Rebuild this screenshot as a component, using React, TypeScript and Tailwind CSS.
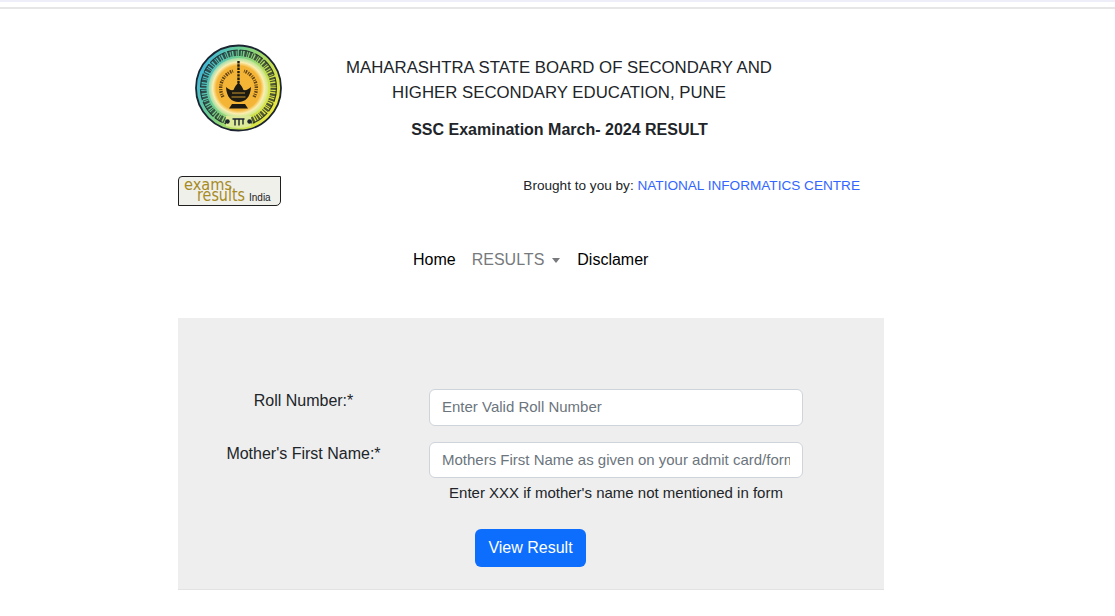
import React from 'react';

function BoardLogo() {
  return (
    <svg width="88" height="88" viewBox="0 0 88 88" className="block">
      <defs>
        <linearGradient id="ring" x1="0" y1="0.25" x2="1" y2="0.75">
          <stop offset="0" stopColor="#38b4e6" />
          <stop offset="0.35" stopColor="#6fcf8f" />
          <stop offset="0.7" stopColor="#c4df52" />
          <stop offset="1" stopColor="#f5ea3a" />
        </linearGradient>
        <radialGradient id="core">
          <stop offset="0" stopColor="#f4b436" />
          <stop offset="0.74" stopColor="#f4b436" />
          <stop offset="0.86" stopColor="#fbeeb0" />
          <stop offset="1" stopColor="#d9eeb4" stopOpacity="0.5" />
        </radialGradient>
      </defs>
      <circle cx="43.500" cy="44" r="42.500" fill="url(#ring)" stroke="#1b2430" strokeWidth="1.800" />
      <circle cx="43.500" cy="44" r="30" fill="url(#core)" />
      {/* script round the ring, broken strokes under a head line */}
      <g fill="none" stroke="#20282a">
        <circle cx="43.500" cy="44" r="38" strokeWidth="1.200" strokeDasharray="14 2 9 2 18 2 11 2" opacity="0.85" />
        <circle cx="43.500" cy="44" r="35" strokeWidth="6" strokeDasharray="2 1 1.200 1.400 2.400 .8 1 1.200" opacity="0.75" />
      </g>
      <g fill="none" stroke="#4a3112" strokeWidth="3.400" opacity="0.85" strokeDasharray="1.600 .9 1 1.200">
        <path d="M28 53a18 18 0 0 1 10-26" />
        <path d="M59 53a18 18 0 0 0-10-26" />
      </g>
      {/* bottom of the ring with the town name */}
      <path d="M31 72h25v10a40 40 0 0 1-25 0z" fill="#dce998" />
      <circle cx="32.500" cy="77.500" r="2.200" fill="#1b2430" />
      <circle cx="54.500" cy="77.500" r="2.200" fill="#1b2430" />
      <path d="M37.500 75h12M40 75v6.500M44 75v6.500M48 75v5.500" stroke="#1b2430" strokeWidth="1.400" />
      {/* lamp */}
      <path d="M43.500 17v24" stroke="#1d1a12" strokeWidth="2.400" strokeDasharray="2.400 .9" />
      <path d="M31 43c.5 10 5.500 15 12.500 15S55.500 53 56 43c-2.500 2.500-5 3.500-7.500 3-1-3-2.800-5-5-7.500-2.200 2.500-4 4.500-5 7.500-2.500.5-5-.5-7.500-3z" fill="#1d1a12" />
      <path d="M37 60h13l3 4.500H34z" fill="#1d1a12" />
      <path d="M37 49h13M36.500 53h14" stroke="#f4b436" strokeWidth=".8" />
    </svg>
  );
}

function ExamsBadge() {
  return (
    <svg width="103" height="30" viewBox="0 0 103 30" className="block">
      <path d="M4 .5H102.500V25a4.500 4.500 0 0 1-4.500 4.500H.5V4A3.500 3.500 0 0 1 4 .5z" fill="#f0f0eb" stroke="#1f1f1f" />
      <text x="6" y="14" fontFamily="'DejaVu Sans', sans-serif" fontSize="16" fill="#a68a24" textLength="48" lengthAdjust="spacingAndGlyphs">
        exams
      </text>
      <text x="19" y="25" fontFamily="'DejaVu Sans', sans-serif" fontSize="17" fill="#a68a24" textLength="48" lengthAdjust="spacingAndGlyphs">
        results
      </text>
      <text x="71" y="25" fontFamily="'Liberation Sans', sans-serif" fontSize="10" fill="#222">
        India
      </text>
    </svg>
  );
}

export default function App() {
  return (
    <div className="min-h-[616px] bg-white font-['Liberation_Sans',Arial,sans-serif] text-[#212529] overflow-hidden">
      <div className="h-[2px] bg-[#eeeef8]" />
      <div className="mt-[5px] h-[2px] bg-[#e6e6e6]" />

      <div className="ml-[178px] w-[706px]">
        {/* Header */}
        <div className="flex pt-[35px] h-[167px]">
          <div className="w-[104px] pl-[17px] shrink-0">
            <BoardLogo />
          </div>
          <div className="w-[554px] text-center pt-[11px]">
            <p className="text-[16.800px] leading-[25px]">
              MAHARASHTRA STATE BOARD OF SECONDARY AND
            </p>
            <p className="text-[16.800px] leading-[25px]">
              HIGHER SECONDARY EDUCATION, PUNE
            </p>
            <p className="mt-[13px] pl-[1px] text-[16px] leading-[24px] font-bold">
              SSC Examination March- 2024 RESULT
            </p>
          </div>
        </div>

        {/* Brought to you by */}
        <div className="flex items-start justify-between h-[64px] pr-[24px]">
          <ExamsBadge />
          <p className="text-[13.600px] leading-[20px]">
            Brought to you by: <span className="text-[#3366ff]">NATIONAL INFORMATICS CENTRE</span>
          </p>
        </div>

        {/* Nav */}
        <nav className="flex items-center h-[40px] pl-[235px] text-[16px]">
          <span className="text-black">Home</span>
          <span className="ml-[16px] text-[#77797c] flex items-center">
            RESULTS
            <span className="ml-[8px] mt-[1px] w-0 h-0 border-x-[4px] border-x-transparent border-t-[5px] border-t-[#77797c]" />
          </span>
          <span className="ml-[17px] text-black">Disclamer</span>
        </nav>

        {/* Form */}
        <div className="mt-[38px] h-[272px] bg-[#eeeeee] border-b border-[#e2e2e2] pt-[71px] text-[16px]">
          <div className="flex items-start h-[53px]">
            <label className="w-[251px] text-center leading-[24px]">Roll Number:*</label>
            <input
              className="w-[374px] h-[37px] rounded-[6px] border border-[#ced4da] bg-white px-[12px] pb-[2px] text-[15px] placeholder:text-[#6c757d] outline-none"
              placeholder="Enter Valid Roll Number"
            />
          </div>
          <div className="flex items-start">
            <label className="w-[251px] text-center leading-[24px]">Mother's First Name:*</label>
            <div className="w-[374px]">
              <input
                className="w-full h-[36px] rounded-[6px] border border-[#ced4da] bg-white px-[12px] pb-[2px] text-[15px] placeholder:text-[#6c757d] outline-none"
                placeholder="Mothers First Name as given on your admit card/form"
              />
              <p className="mt-[4px] text-center text-[15px] leading-[22px]">
                Enter XXX if mother's name not mentioned in form
              </p>
            </div>
          </div>
          <button className="block ml-[297px] mt-[25px] w-[111px] h-[38px] rounded-[6px] bg-[#0d6efd] text-white text-[16px]">
            View Result
          </button>
        </div>
      </div>
    </div>
  );
}
